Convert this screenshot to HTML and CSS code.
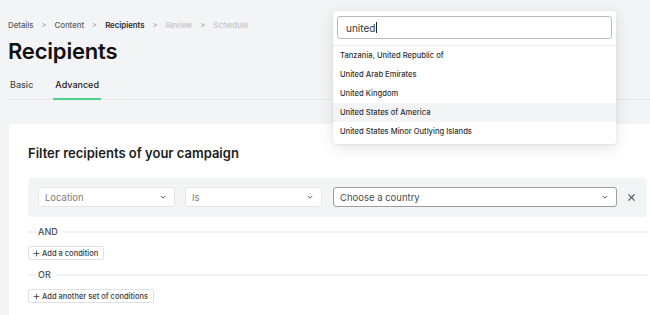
FILE: index.html
```html
<!DOCTYPE html>
<html lang="en">
<head>
  <meta charset="UTF-8">
  <title>Recipients</title>
  <link rel="stylesheet" href="styles.css">
</head>
<body>
  <main class="page">
    <nav class="crumbs">
      <span class="crumb">Details</span>
      <span class="sep">&gt;</span>
      <span class="crumb">Content</span>
      <span class="sep">&gt;</span>
      <span class="crumb current">Recipients</span>
      <span class="sep">&gt;</span>
      <span class="crumb todo">Review</span>
      <span class="sep">&gt;</span>
      <span class="crumb todo">Schedule</span>
    </nav>
    <h1 class="title">Recipients</h1>
    <div class="tabs">
      <span class="tab">Basic</span>
      <span class="tab active">Advanced</span>
    </div>

    <section class="card">
      <h2 class="card-title">Filter recipients of your campaign</h2>

      <div class="filter-group">
        <div class="select sel-field">
          <span>Location</span>
          <svg class="chev" viewBox="0 0 8 5"><polyline points="1,1 4,4 7,1"/></svg>
        </div>
        <div class="select sel-op">
          <span>Is</span>
          <svg class="chev" viewBox="0 0 8 5"><polyline points="1,1 4,4 7,1"/></svg>
        </div>
        <div class="select sel-value focused">
          <span>Choose a country</span>
          <svg class="chev" viewBox="0 0 8 5"><polyline points="1,1 4,4 7,1"/></svg>
        </div>
        <svg class="remove" viewBox="0 0 10 10"><path d="M1.5 1.5 L8.5 8.5 M8.5 1.5 L1.5 8.5"/></svg>
      </div>

      <div class="divider"><span>AND</span></div>
      <button class="add-btn"><svg viewBox="0 0 10 10"><path d="M5 1 V9 M1 5 H9"/></svg>Add a condition</button>

      <div class="divider"><span>OR</span></div>
      <button class="add-btn"><svg viewBox="0 0 10 10"><path d="M5 1 V9 M1 5 H9"/></svg>Add another set of conditions</button>
    </section>
  </main>

  <div class="dropdown">
    <div class="search">
      <div class="search-input">united<span class="caret"></span></div>
    </div>
    <ul class="options">
      <li>Tanzania, United Republic of</li>
      <li>United Arab Emirates</li>
      <li>United Kingdom</li>
      <li class="hover">United States of America</li>
      <li>United States Minor Outlying Islands</li>
    </ul>
  </div>
</body>
</html>
```

FILE: styles.css
```css
body {
  margin: 0;
  background: #f3f4f6;
  font-family: "Inter", "Liberation Sans", sans-serif;
  color: #1f2124;
  overflow: hidden;
}
.page {
  padding: 19px 0 0 8px;
}
.crumbs {
  display: flex;
  align-items: center;
  gap: 8px;
  height: 12px;
  font-size: 7.8px;
  font-weight: 500;
  color: #5a5d62;
}
.crumb.current {
  color: #26282b;
  font-weight: 600;
}
.crumb.todo {
  color: #c3c5c9;
}
.sep {
  color: #a0a3a8;
  font-size: 7.5px;
}
.title {
  margin: 6px 0 0;
  font-size: 22px;
  font-weight: 600;
  letter-spacing: -0.2px;
  line-height: 28px;
  color: #111;
}
.tabs {
  display: flex;
  margin-top: 10px;
  border-bottom: 1px solid #e7e8ea;
}
.tab {
  padding: 4px 2px 8px;
  margin-right: 18px;
  font-size: 9px;
  font-weight: 500;
  color: #45484d;
}
.tab.active {
  color: #222;
  border-bottom: 2px solid #4fd08d;
  margin-bottom: -1px;
}
.card {
  margin: 24px 0 0 1px;
  background: #fff;
  border-radius: 4px 0 0 0;
  padding: 21px 0 20px 19px;
  height: 200px;
}
.card-title {
  margin: 0 0 17px;
  font-size: 13px;
  font-weight: 600;
  color: #1b1c1e;
}
.filter-group {
  display: flex;
  align-items: center;
  background: #f3f4f6;
  border-radius: 4px;
  padding: 9px 0 10px 10px;
  margin-right: 3px;
  gap: 10px;
}
.select {
  display: flex;
  align-items: center;
  justify-content: space-between;
  box-sizing: border-box;
  height: 20px;
  padding: 0 8px 0 6px;
  background: #fff;
  border: 1px solid #e3e5e8;
  border-radius: 3px;
  font-size: 9.5px;
  color: #7a7d82;
}
.sel-field, .sel-op {
  width: 137px;
}
.sel-value {
  width: 284px;
  margin-left: 1px;
  color: #4a4d52;
}
.select.focused {
  border-color: #9a9da2;
}
.chev {
  width: 6px;
  height: 4px;
  fill: none;
  stroke: #55585d;
  stroke-width: 1.3;
}
.remove {
  width: 9px;
  height: 9px;
  fill: none;
  stroke: #4a4d52;
  stroke-width: 1.2;
}
.divider {
  display: flex;
  align-items: center;
  margin: 9px 3px 0 0;
  font-size: 9px;
  font-weight: 500;
  color: #4a4d52;
}
.divider::before {
  content: "";
  width: 8px;
  height: 2px;
  background: #f0f1f3;
  margin-right: 2px;
}
.divider::after {
  content: "";
  flex: 1;
  height: 2px;
  background: #f0f1f3;
  margin-left: 5px;
}
.add-btn {
  display: flex;
  align-items: center;
  gap: 2px;
  margin-top: 9px;
  height: 14px;
  padding: 0 5px 0 4px;
  background: #fff;
  border: 1px solid #dfe1e4;
  border-radius: 2px;
  font-family: "Inter", "Liberation Sans", sans-serif;
  font-size: 7.5px;
  font-weight: 500;
  color: #3a3d42;
}
.add-btn svg {
  width: 7px;
  height: 7px;
  fill: none;
  stroke: #3a3d42;
  stroke-width: 1.2;
}
.dropdown {
  position: absolute;
  left: 333px;
  top: 11px;
  width: 283px;
  background: #fff;
  border-radius: 3px;
  box-shadow: 0 4px 16px rgba(0, 0, 0, 0.10), 0 1px 3px rgba(0, 0, 0, 0.06);
}
.search {
  padding: 5px 4px 6px;
  border-bottom: 1px solid #eceef0;
}
.search-input {
  display: flex;
  align-items: center;
  box-sizing: border-box;
  height: 23px;
  padding: 0 8px;
  border: 1px solid #b8bbc0;
  border-radius: 3px;
  font-size: 10px;
  color: #333;
}
.caret {
  width: 1px;
  height: 11px;
  background: #222;
  margin-left: 1px;
}
.options {
  list-style: none;
  margin: 0;
  padding: 0 0 3px;
}
.options li {
  height: 19px;
  line-height: 19px;
  padding: 0 7px;
  font-size: 7.6px;
  font-weight: 500;
  color: #2f3236;
}
.options li.hover {
  background: #f3f4f6;
}
```
